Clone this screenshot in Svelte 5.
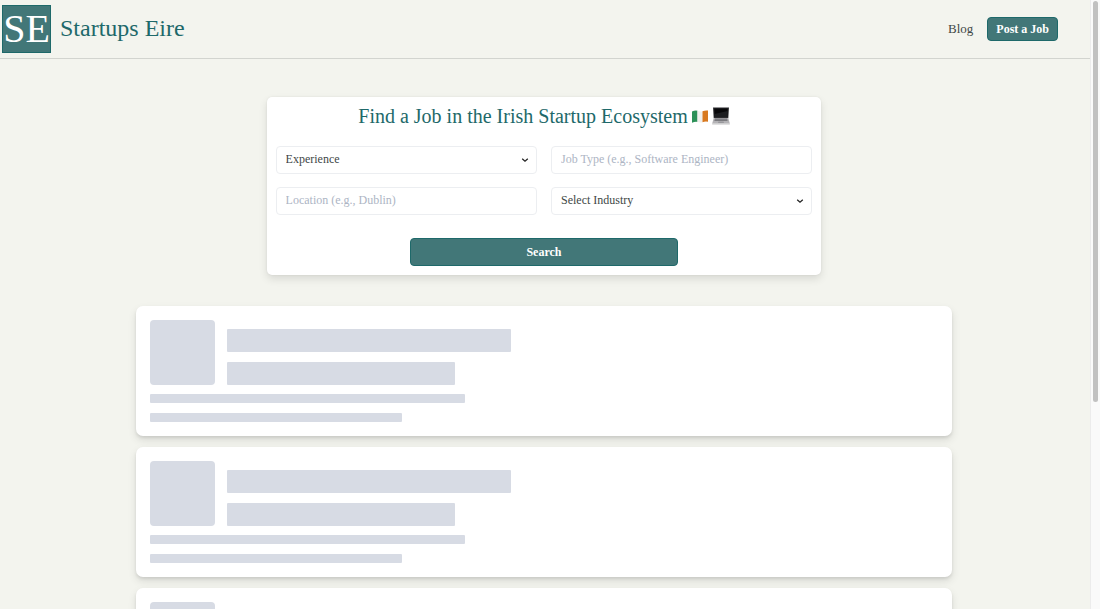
<script>
  const placeholders = [1, 2, 3];
  let experience = $state('');
  let jobType = $state('');
  let location = $state('');
  let industry = $state('');
</script>

<div class="shell">
  <div class="page">
    <header>
      <a class="brand" href="#home">
        <span class="mark">SE</span>
        <span class="name">Startups Eire</span>
      </a>
      <nav>
        <a class="link" href="#blog">Blog</a>
        <a class="post" href="#post">Post a Job</a>
      </nav>
    </header>

    <main>
      <form class="search" onsubmit={(e) => e.preventDefault()}>
        <h1>
          <span>Find a Job in the Irish Startup Ecosystem</span>
          <svg class="flag" viewBox="0 0 16 13" role="img" aria-label="Irish flag">
            <path d="M0 1.5Q3 .2 5.5 .8V12Q3 11.5 0 12.8Z" fill="#2c9158" />
            <path d="M5.5 .8Q8 1.7 10.5 1.2V12.2Q8 12.8 5.5 12Z" fill="#f1f0ed" />
            <path d="M10.5 1.2Q13 .3 16 .6V11.8Q13 11.3 10.5 12.2Z" fill="#d87920" />
          </svg>
          <svg class="laptop" viewBox="0 0 18 18" role="img" aria-label="Laptop">
            <path d="M1 .5H17L16.3 11H1.7Z" fill="#2b2b2e" />
            <path d="M2.2 1.5H15.8L15.3 10H2.7Z" fill="#08080a" />
            <path d="M2.5 7L15.5 4L15.3 10H2.7Z" fill="#1d1e21" />
            <path d="M1.7 11H16.3L17.8 16.5H.2Z" fill="#b4b3b6" />
            <path d="M3 11.6H15L15.6 14H2.4Z" fill="#77777b" />
            <path d="M2.7 12.7H15.3" stroke="#9b9ba0" stroke-width=".4" />
            <path d="M6.5 14.6H11.5L12 16H6Z" fill="#98989c" />
            <path d="M.2 16.5H17.8V17.5H.2Z" fill="#c2c2c4" />
          </svg>
        </h1>

        <div class="fields">
          <div class="select">
            <select aria-label="Experience" bind:value={experience}>
              <option value="">Experience</option>
              <option value="junior">Junior</option>
              <option value="senior">Senior</option>
            </select>
            <svg viewBox="0 0 8 8" aria-hidden="true"><path d="M1.2 2.7L4 5.3L6.8 2.7" /></svg>
          </div>
          <input type="text" aria-label="Job type" placeholder="Job Type (e.g., Software Engineer)" bind:value={jobType} />
          <input type="text" aria-label="Location" placeholder="Location (e.g., Dublin)" bind:value={location} />
          <div class="select">
            <select aria-label="Industry" bind:value={industry}>
              <option value="">Select Industry</option>
              <option value="fintech">Fintech</option>
              <option value="health">Health</option>
            </select>
            <svg viewBox="0 0 8 8" aria-hidden="true"><path d="M1.2 2.7L4 5.3L6.8 2.7" /></svg>
          </div>
        </div>

        <button type="submit">Search</button>
      </form>

      <div class="jobs" aria-busy="true">
        {#each placeholders as id (id)}
          <div class="job">
            <div class="top">
              <div class="logo"></div>
              <div class="titles">
                <div class="bar wide"></div>
                <div class="bar"></div>
              </div>
            </div>
            <div class="lines">
              <div class="bar wide"></div>
              <div class="bar"></div>
            </div>
          </div>
        {/each}
      </div>
    </main>
  </div>
  <div class="track" aria-hidden="true"><div class="thumb"></div></div>
</div>

<style>
  :global(body) {
    margin: 0;
    background: #f3f4ee;
  }

  .shell {
    display: grid;
    grid-template-columns: minmax(0, 1fr) 10px;
    height: 100vh;
    font-family: 'Liberation Serif', 'Times New Roman', serif;
    color: #414746;
  }

  .shell *,
  .shell {
    box-sizing: border-box;
  }

  .page {
    overflow-y: auto;
    scrollbar-width: none;
  }

  header {
    display: flex;
    align-items: center;
    justify-content: space-between;
    padding: 5px 32px 5px 2px;
    border-bottom: 1px solid #d2d4cf;
  }

  a {
    text-decoration: none;
    color: inherit;
  }

  .brand,
  nav {
    display: flex;
    align-items: center;
  }

  .brand {
    gap: 9px;
    color: #1e696a;
  }

  .mark {
    display: grid;
    place-items: center;
    width: 49px;
    height: 48px;
    background: #427778;
    border: 1px solid #1e696a;
    color: #fff;
    font-size: 40px;
    line-height: 46px;
  }

  .name {
    padding-bottom: 2px;
    font-size: 24px;
    line-height: 28px;
  }

  nav {
    gap: 14px;
    font-size: 13px;
    line-height: 16px;
  }

  .post {
    padding: 3px 8px;
    border: 1px solid #1e696a;
    border-radius: 4px;
    background: #427778;
    color: #fff;
    font-size: 12px;
    font-weight: bold;
  }

  main {
    display: flex;
    flex-direction: column;
    align-items: center;
    gap: 31px;
    padding: 38px 2px 30px 0;
  }

  .search {
    display: flex;
    flex-direction: column;
    align-items: center;
    width: 51%;
    padding: 9px;
    border-radius: 5px;
    background: #fff;
    box-shadow: 0 4px 8px #0000001c, 0 0 2px #00000014;
  }

  h1 {
    display: flex;
    align-items: center;
    gap: 4px;
    margin: 0;
    font-size: 20px;
    line-height: 20px;
    font-weight: normal;
    color: #1e696a;
    white-space: nowrap;
  }

  .flag {
    width: 16px;
    height: 13px;
  }

  .laptop {
    width: 18px;
    height: 18px;
  }

  .fields {
    display: grid;
    grid-template-columns: 1fr 1fr;
    gap: 13px 14px;
    width: 100%;
    margin: 20px 0 23px;
  }

  .select {
    display: grid;
    align-items: center;
  }

  .select > * {
    grid-area: 1 / 1;
  }

  .select svg {
    justify-self: end;
    width: 8px;
    height: 8px;
    margin-right: 8px;
    fill: none;
    stroke: #222;
    stroke-width: 1.2;
    pointer-events: none;
  }

  select,
  input {
    appearance: none;
    width: 100%;
    height: 28px;
    padding: 0 9px 2px;
    border: 1px solid #eceef1;
    border-radius: 4px;
    background: #fff;
    color: #414746;
    font: 12px/16px 'Liberation Serif', 'Times New Roman', serif;
  }

  input::placeholder {
    color: #adb5c4;
    opacity: 1;
  }

  button {
    width: 50%;
    height: 28px;
    padding: 0;
    border: 1px solid #1e696a;
    border-radius: 4px;
    background: #427778;
    color: #fff;
    font: bold 12px/16px 'Liberation Serif', 'Times New Roman', serif;
  }

  .jobs {
    display: grid;
    gap: 11px;
    width: 75%;
  }

  .job {
    display: grid;
    gap: 9px;
    padding: 14px;
    border-radius: 7px;
    background: #fff;
    box-shadow: 0 4px 8px #0000001c, 0 2px 3px #00000014;
  }

  .top {
    display: flex;
    gap: 12px;
  }

  .logo {
    width: 65px;
    height: 65px;
    border-radius: 4px;
    background: #d7dbe4;
  }

  .titles {
    display: grid;
    flex: 1;
    align-content: end;
    gap: 10px;
  }

  .lines {
    display: grid;
    gap: 10px;
  }

  .bar {
    width: 32%;
    height: 9px;
    border-radius: 1px;
    background: #d7dbe4;
  }

  .wide {
    width: 40%;
  }

  .titles .bar {
    height: 23px;
  }

  .track {
    padding: 1px 1px 0 2px;
    border-left: 1px solid #ececec;
    background: #fafafa;
  }

  .thumb {
    width: 5px;
    height: 66%;
    border-radius: 3px;
    background: #c1c1c1;
  }
</style>
